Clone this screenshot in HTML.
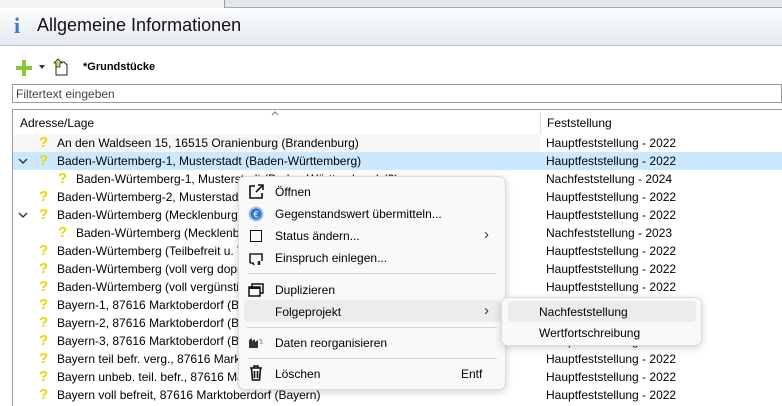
<!DOCTYPE html>
<html><head><meta charset="utf-8"><style>
*{margin:0;padding:0;box-sizing:border-box}
body{width:782px;height:406px;overflow:hidden;background:#fff;font-family:"Liberation Sans",sans-serif;font-size:12px;color:#000;position:relative}
.abs{position:absolute}
.row{position:absolute;left:13px;width:769px;height:18px;line-height:18px;white-space:nowrap}
.row .t{position:absolute}
.row .f{position:absolute;left:533px}
.q{position:absolute;color:#e6d800;font-weight:bold;font-size:15px;line-height:18px}
.chev{position:absolute;left:5px;top:5px}
.menu{position:absolute;background:#f9f9f9;border:1px solid #dcdcdc;border-radius:7px;box-shadow:0 2px 8px rgba(0,0,0,.18)}
.mi{position:absolute;left:36px;font-size:12px;line-height:14px}
.sep{position:absolute;left:8px;right:8px;height:1px;background:#d8d8d8}
.arr{position:absolute;left:245px;font-size:15px;color:#333}
</style></head><body>
<div class="abs" style="left:0;top:0;width:782px;height:8px;background:#e3e6ea;border-bottom:1px solid #a8acb2"></div>
<div class="abs" style="left:0;top:0;width:225px;height:8px;background:#f4f4f4;border-right:1px solid #999"></div>
<div class="abs" style="left:0;top:9px;width:782px;height:37px;background:linear-gradient(#fbfcfd,#e4e9f0);border-bottom:1px solid #b9c2cf"></div>
<div class="abs" style="left:14px;top:13px;font-family:'Liberation Serif',serif;font-weight:bold;font-size:22px;color:#3a7ec6">i</div>
<div class="abs" style="left:37px;top:15px;font-size:18px;color:#111">Allgemeine Informationen</div>
<div class="abs" style="left:16px;top:66px;width:16px;height:4px;background:#8cc63f"></div>
<div class="abs" style="left:22px;top:60px;width:4px;height:16px;background:#8cc63f"></div>
<div class="abs" style="left:39px;top:65px;width:0;height:0;border-left:3px solid transparent;border-right:3px solid transparent;border-top:4px solid #333"></div>
<svg class="abs" style="left:52px;top:58px" width="16" height="18" viewBox="0 0 16 18"><path d="M4 4h8l3 3v10H4z" fill="#fff" stroke="#222"/><path d="M2 5l4-4 4 4H8v4H4V5z" fill="#c8e05a" stroke="#222" stroke-width=".8"/></svg>
<div class="abs" style="left:83px;top:61px;font-size:11px;font-weight:bold">*Grundstücke</div>
<div class="abs" style="left:12px;top:84px;width:770px;height:19px;border:1px solid #9c9c9c;background:#fff"></div>
<div class="abs" style="left:16px;top:87px;font-size:12px;color:#444">Filtertext eingeben</div>
<div class="abs" style="left:12px;top:109px;width:770px;height:297px;border-left:1px solid #9c9c9c;border-top:1px solid #9c9c9c"></div>
<svg class="abs" style="left:271px;top:111px" width="8" height="5" viewBox="0 0 8 5" fill="none" stroke="#777"><path d="M1 4l3-3 3 3"/></svg>
<div class="abs" style="left:20px;top:116px">Adresse/Lage</div>
<div class="abs" style="left:540px;top:111px;width:1px;height:23px;background:#ddd"></div>
<div class="abs" style="left:547px;top:116px">Feststellung</div>
<div class="abs" style="left:13px;top:135px;width:527px;height:17px;background:#f7f7f7"></div>

<div class="row" style="top:134px"><span class="q" style="left:26px">?</span><span class="t" style="left:44px">An den Waldseen 15, 16515 Oranienburg (Brandenburg)</span><span class="f">Hauptfeststellung - 2022</span></div>
<div class="row" style="top:152px;background:#cce8ff"><svg class="chev" width="10" height="8" viewBox="0 0 10 8" fill="none" stroke="#333" stroke-width="1.4"><path d="M1 2l4 4 4-4"/></svg><span class="q" style="left:26px">?</span><span class="t" style="left:44px">Baden-Würtemberg-1, Musterstadt (Baden-Württemberg)</span><span class="f">Hauptfeststellung - 2022</span></div>
<div class="row" style="top:170px"><span class="q" style="left:45px">?</span><span class="t" style="left:63px">Baden-Würtemberg-1, Musterstadt (Baden-Württemberg) (2)</span><span class="f">Nachfeststellung - 2024</span></div>
<div class="row" style="top:188px"><span class="q" style="left:26px">?</span><span class="t" style="left:44px">Baden-Würtemberg-2, Musterstadt (Baden-Württemberg)</span><span class="f">Hauptfeststellung - 2022</span></div>
<div class="row" style="top:206px"><svg class="chev" width="10" height="8" viewBox="0 0 10 8" fill="none" stroke="#333" stroke-width="1.4"><path d="M1 2l4 4 4-4"/></svg><span class="q" style="left:26px">?</span><span class="t" style="left:44px">Baden-Würtemberg (Mecklenburg-Vorpommern)</span><span class="f">Hauptfeststellung - 2022</span></div>
<div class="row" style="top:224px"><span class="q" style="left:45px">?</span><span class="t" style="left:63px">Baden-Würtemberg (Mecklenburg-Vorpommern)</span><span class="f">Nachfeststellung - 2023</span></div>
<div class="row" style="top:242px"><span class="q" style="left:26px">?</span><span class="t" style="left:44px">Baden-Würtemberg (Teilbefreit u. Teilverg.)</span><span class="f">Hauptfeststellung - 2022</span></div>
<div class="row" style="top:260px"><span class="q" style="left:26px">?</span><span class="t" style="left:44px">Baden-Würtemberg (voll verg doppelt)</span><span class="f">Hauptfeststellung - 2022</span></div>
<div class="row" style="top:278px"><span class="q" style="left:26px">?</span><span class="t" style="left:44px">Baden-Würtemberg (voll vergünstigt)</span><span class="f">Hauptfeststellung - 2022</span></div>
<div class="row" style="top:296px"><span class="q" style="left:26px">?</span><span class="t" style="left:44px">Bayern-1, 87616 Marktoberdorf (Bayern)</span><span class="f">Hauptfeststellung - 2022</span></div>
<div class="row" style="top:314px"><span class="q" style="left:26px">?</span><span class="t" style="left:44px">Bayern-2, 87616 Marktoberdorf (Bayern)</span><span class="f">Hauptfeststellung - 2022</span></div>
<div class="row" style="top:332px"><span class="q" style="left:26px">?</span><span class="t" style="left:44px">Bayern-3, 87616 Marktoberdorf (Bayern)</span><span class="f">Hauptfeststellung - 2022</span></div>
<div class="row" style="top:350px"><span class="q" style="left:26px">?</span><span class="t" style="left:44px">Bayern teil befr. verg., 87616 Marktoberdorf (Bayern)</span><span class="f">Hauptfeststellung - 2022</span></div>
<div class="row" style="top:368px"><span class="q" style="left:26px">?</span><span class="t" style="left:44px">Bayern unbeb. teil. befr., 87616 Marktoberdorf (Bayern)</span><span class="f">Hauptfeststellung - 2022</span></div>
<div class="row" style="top:386px"><span class="q" style="left:26px">?</span><span class="t" style="left:44px">Bayern voll befreit, 87616 Marktoberdorf (Bayern)</span><span class="f">Hauptfeststellung - 2022</span></div>

<div class="menu" style="left:238px;top:176px;width:268px;height:214px">
 <svg class="abs" style="left:9px;top:7px" width="16" height="16" viewBox="0 0 16 16" fill="none" stroke="#111" stroke-width="1.6"><path d="M7 2H2v12h12V9"/><path d="M8 8l7-7M10 1h5v5"/></svg>
 <div class="mi" style="top:8px">Öffnen</div>
 <svg class="abs" style="left:9px;top:29px" width="16" height="16" viewBox="0 0 16 16"><circle cx="8" cy="8" r="7.5" fill="#9cc4ea"/><circle cx="8" cy="8" r="5.5" fill="#2f78c4"/><text x="8" y="11.5" font-size="9" fill="#fff" text-anchor="middle" font-family="Liberation Sans">€</text></svg>
 <div class="mi" style="top:30px">Gegenstandswert übermitteln...</div>
 <div class="abs" style="left:11px;top:53px;width:12px;height:12px;border:1.5px solid #111"></div>
 <div class="mi" style="top:52px">Status ändern...</div>
 <div class="arr" style="top:49px">&#8250;</div>
 <svg class="abs" style="left:9px;top:74px" width="16" height="16" viewBox="0 0 16 16" fill="none" stroke="#222" stroke-width="1.6"><path d="M2 12V3h12v7"/><path d="M2 12h3l1 2"/><path d="M11 10v4" stroke-width="2.5"/></svg>
 <div class="mi" style="top:74px">Einspruch einlegen...</div>
 <div class="sep" style="top:96px"></div>
 <svg class="abs" style="left:9px;top:106px" width="16" height="14" viewBox="0 0 16 14" fill="none" stroke="#111" stroke-width="1.5"><rect x="1" y="4" width="11" height="9"/><path d="M4 4V1h11v9h-3"/><path d="M1 5h11" stroke-width="2"/></svg>
 <div class="mi" style="top:106px">Duplizieren</div>
 <div class="abs" style="left:5px;top:123px;width:257px;height:22px;background:#ececec;border-radius:4px"></div>
 <div class="mi" style="top:128px">Folgeprojekt</div>
 <div class="arr" style="top:125px">&#8250;</div>
 <div class="sep" style="top:150px"></div>
 <svg class="abs" style="left:9px;top:158px" width="16" height="14" viewBox="0 0 16 14"><path d="M1 13V5l3-2v3l3-2v3l3-2v8z" fill="#333"/><path d="M11 4l3 2M12 8h3" stroke="#777"/></svg>
 <div class="mi" style="top:159px">Daten reorganisieren</div>
 <div class="sep" style="top:181px"></div>
 <svg class="abs" style="left:10px;top:188px" width="14" height="16" viewBox="0 0 14 16" fill="none" stroke="#111" stroke-width="1.6"><path d="M1 3h12M5 3V1h4v2M2.5 3l1 12h7l1-12M5.5 6v7M8.5 6v7"/></svg>
 <div class="mi" style="top:190px">Löschen</div>
 <div class="abs" style="left:222px;top:190px">Entf</div>
</div>

<div class="menu" style="left:501px;top:297px;width:201px;height:49px">
 <div class="abs" style="left:6px;top:3px;width:188px;height:21px;background:#ececec;border-radius:4px"></div>
 <div class="abs" style="left:37px;top:7px">Nachfeststellung</div>
 <div class="abs" style="left:37px;top:28px">Wertfortschreibung</div>
</div>
</body></html>
